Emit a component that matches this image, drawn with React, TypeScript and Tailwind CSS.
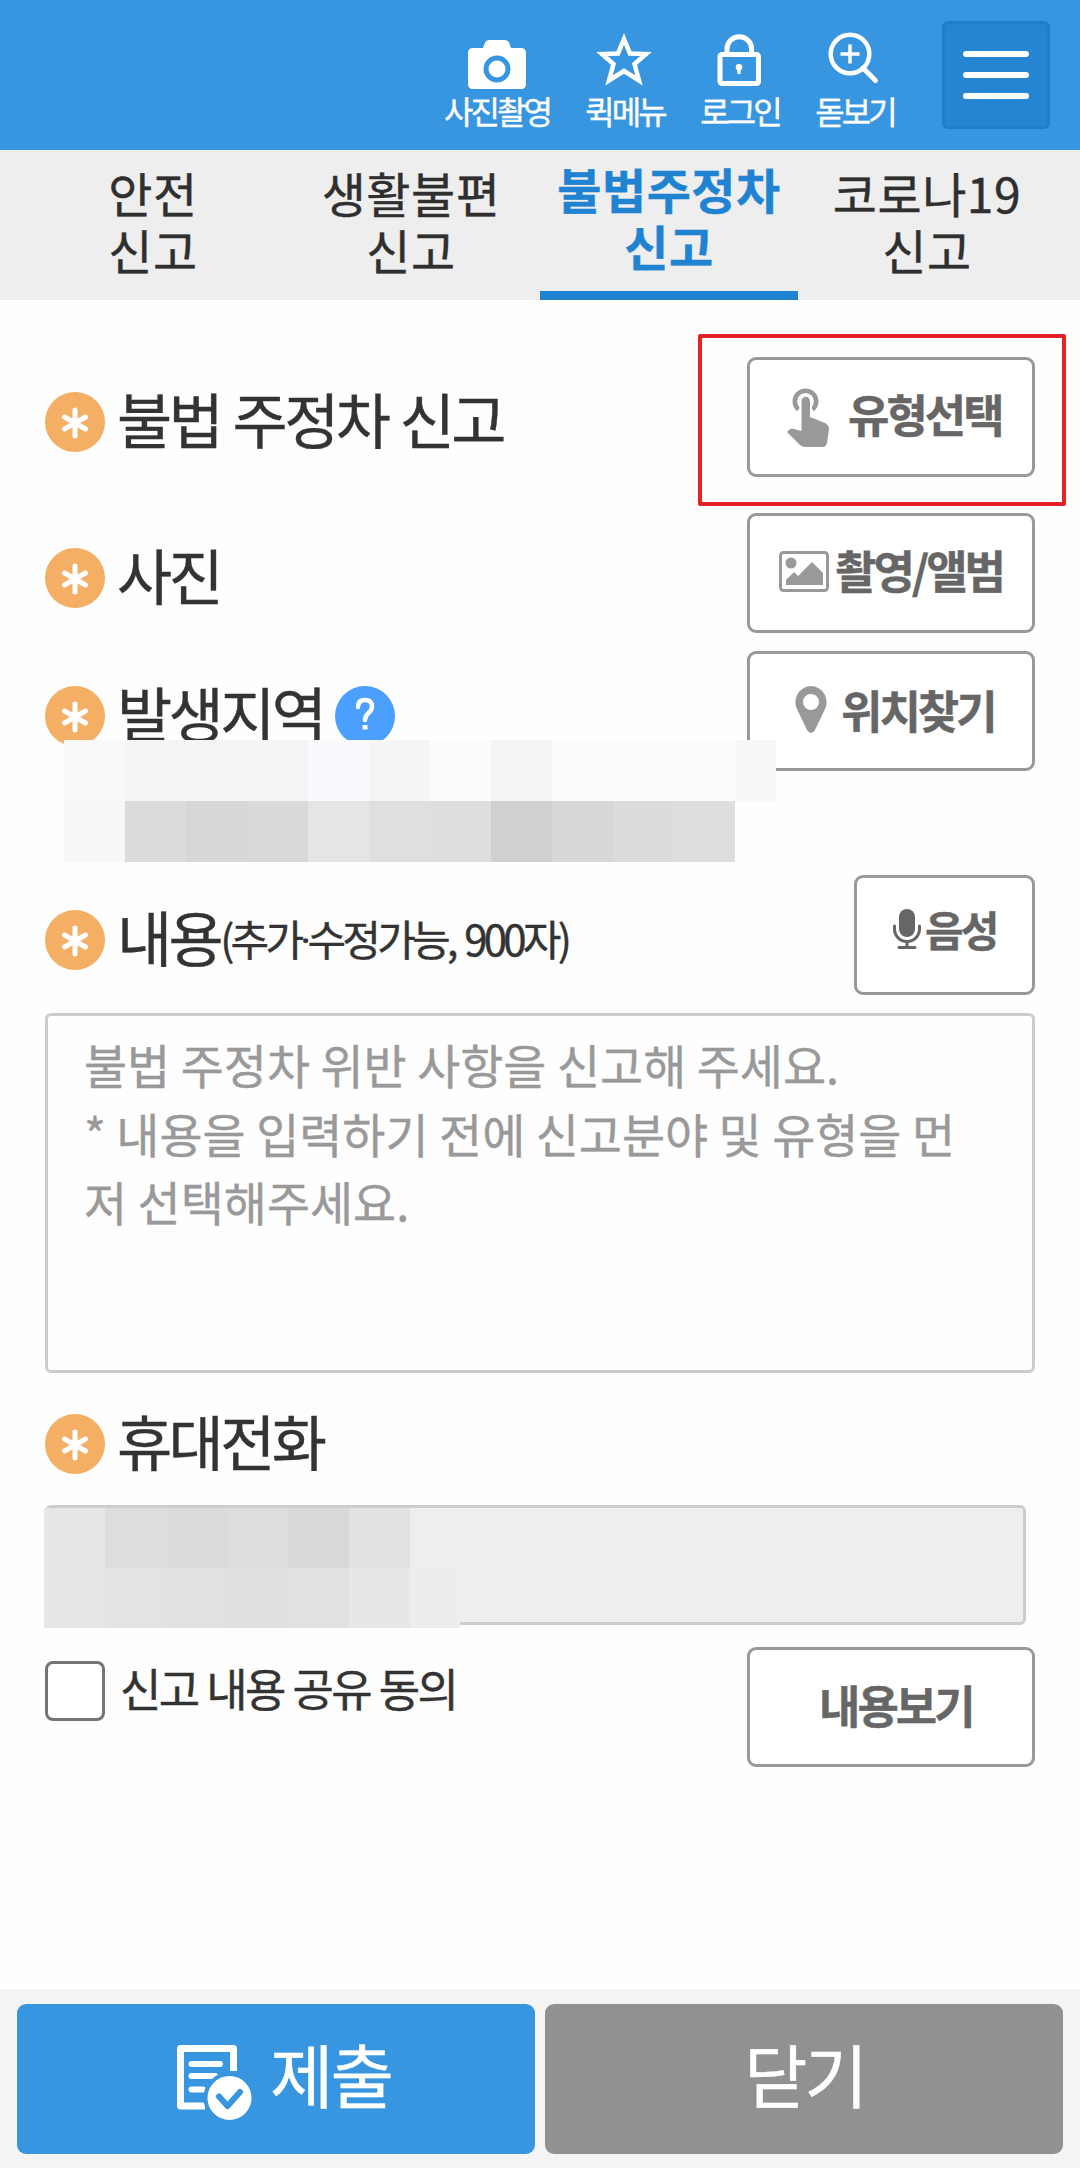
import type { ReactNode } from "react";

const tabs = [
  { top: "안전", bottom: "신고", active: false },
  { top: "생활불편", bottom: "신고", active: false },
  { top: "불법주정차", bottom: "신고", active: true },
  { top: "코로나19", bottom: "신고", active: false },
];

const addressMask = [
  ["#fbf9f8", "#f5f5f5", "#f5f5f5", "#f5f5f5", "#f8fafd", "#f5f5f5", "#fbfbfb", "#f5f5f5", "#fbfbfb", "#fcfcfc", "#fcfcfc", "#f8f8f8"],
  ["#f7f7f7", "#dbdbdb", "#d7d7d7", "#d9d9d9", "#e5e5e5", "#dfdfdf", "#dedede", "#d0d0d0", "#d7d7d7", "#dcdcdc", "#dedede", "#fefefe"],
];

const phoneMask = [
  ["#e6e6e6", "#dddddd", "#dbdbdb", "#dddddd", "#d9d9d9", "#e2e2e2", "#eeeeee"],
  ["#e6e6e6", "#e3e3e3", "#e1e1e1", "#e0e0e0", "#e1e1e1", "#e7e7e7", "#ededed"],
];

function Mask({ rows, last }: { rows: string[][]; last: number }) {
  return (
    <>
      {rows.map((row, r) => (
        <div key={r} className="flex flex-1">
          {row.map((color, i) => (
            <div key={i} style={{ backgroundColor: color, width: i === row.length - 1 ? last : 61 }} />
          ))}
        </div>
      ))}
    </>
  );
}

function Required() {
  return (
    <svg viewBox="0 0 60 60" className="mt-[35px] h-[60px] w-[60px] shrink-0">
      <circle cx="30" cy="30" r="30" fill="#f5af65" />
      <g stroke="#fff" strokeWidth="5" strokeLinecap="round">
        <path d="M30 18v26M19.500 25l21 12M40.500 25L19.500 37" />
      </g>
    </svg>
  );
}

function Row({ label, children, extra }: { label: string; children?: ReactNode; extra?: ReactNode }) {
  return (
    <div className="flex h-[120px] items-start px-[45px]">
      <Required />
      <span className="mt-[31px] ml-[12px] text-[60px] leading-[60px] tracking-[-3.600px] whitespace-nowrap text-[#333] [word-spacing:2.5px]">{label}</span>
      {extra}
      <div className="ml-auto">{children}</div>
    </div>
  );
}

function OutlineButton({ children, className }: { children: ReactNode; className: string }) {
  return (
    <button
      className={`flex h-[120px] items-start rounded-[9px] border-[3px] border-[#999] bg-white text-[45px] leading-[60px] font-bold tracking-[-3px] whitespace-nowrap text-[#666] ${className}`}
    >
      {children}
    </button>
  );
}

export default function App() {
  return (
    <div className="flex h-[2168px] w-[1080px] flex-col overflow-hidden bg-[#fefefe] font-['Noto_Sans_CJK_KR','Noto_Sans',sans-serif] [-webkit-text-stroke:0.4px]">
      <header className="flex h-[150px] shrink-0 items-start justify-end bg-[#3896e1] pr-[30px] text-[32px] leading-[36px] tracking-[-3px] whitespace-nowrap text-white">
        <div className="mt-[30px] flex w-[110px] flex-col items-center">
          <svg viewBox="0 0 60 60" className="h-[60px] w-[60px]" fill="#fff">
            <path d="M6 18H16L18 12.500Q19 10 22 10H38Q41 10 42 12.500L44 18H54Q59 18 59 23V54Q59 59 54 59H6Q1 59 1 54V23Q1 18 6 18Z" />
            <circle cx="30" cy="39" r="11" stroke="#3896e1" strokeWidth="5" />
          </svg>
          <span className="mt-[2px]">사진촬영</span>
        </div>
        <div className="mt-[30px] ml-[22px] flex w-[100px] flex-col items-center">
          <svg viewBox="0 0 60 60" className="h-[60px] w-[60px]" fill="none" stroke="#fff" strokeWidth="4.500">
            <path d="M30 9L36 23.500L52 24L40.500 34L45 50.500L30 41L15 50.500L19.500 34L8 24L24 23.500Z" />
          </svg>
          <span className="mt-[2px] pl-[2px]">퀵메뉴</span>
        </div>
        <div className="mt-[30px] ml-[15px] flex w-[100px] flex-col items-center">
          <svg viewBox="0 0 60 60" className="h-[60px] w-[60px]" fill="none" stroke="#fff" strokeWidth="5">
            <rect x="11" y="24.500" width="38.500" height="29" rx="2" />
            <path d="M18 24V19A12.300 12.300 0 0 1 42.600 19V24" />
            <path d="M30 34a3.300 3.300 0 0 1 3.300 3.300q0 2-1.500 3L31.500 44h-3l-.3-3.700Q26.700 39.300 26.700 37.300a3.300 3.300 0 0 1 3.300-3.300Z" fill="#fff" stroke="none" />
          </svg>
          <span className="mt-[2px] pl-[2px]">로그인</span>
        </div>
        <div className="mt-[30px] ml-[15px] flex w-[100px] flex-col items-center">
          <svg viewBox="0 0 60 60" className="h-[60px] w-[60px]" fill="none" stroke="#fff" strokeWidth="4.500">
            <circle cx="26" cy="24" r="19.300" />
            <path d="M26 14.500V33.500M16.500 24H35.500" strokeWidth="3.500" />
            <path d="M39 38L51.500 50.500" strokeWidth="5" strokeLinecap="round" />
          </svg>
          <span className="mt-[2px] pl-[2px]">돋보기</span>
        </div>
        <button className="mt-[21px] ml-[38px] flex h-[108px] w-[108px] flex-col items-center justify-center gap-[15px] rounded-[6px] border-[3px] border-[#207dc8] bg-[#2585d3]">
          <span className="h-[6px] w-[66px] rounded-full bg-white" />
          <span className="h-[6px] w-[66px] rounded-full bg-white" />
          <span className="h-[6px] w-[66px] rounded-full bg-white" />
        </button>
      </header>

      <nav className="grid h-[150px] shrink-0 grid-cols-4 bg-[#eee] px-[24px] text-center text-[48px] leading-[57px] tracking-[0.500px] whitespace-nowrap text-[#2f2f2f]">
        {tabs.map((t) => (
          <div
            key={t.top}
            className={
              t.active
                ? "border-b-[9px] border-[#1f83d2] pt-[10px] font-bold text-[#1f83d2]"
                : "pt-[14px]"
            }
          >
            {t.top}
            <br />
            {t.bottom}
          </div>
        ))}
      </nav>

      <main className="relative flex flex-1 flex-col pt-[57px]">
        <Row label="불법 주정차 신고">
          <div className="relative">
            <OutlineButton className="w-[288px] pl-[37px]">
              <svg viewBox="0 0 42 59" className="mt-[28px] h-[59px] w-[42px] shrink-0" fill="#999">
                <path d="M11.500 21.500A10.700 10.700 0 1 1 25.500 21.500" fill="none" stroke="#999" strokeWidth="4.600" />
                <path d="M14.500 13A4.250 4.250 0 0 1 23 13V29L38 35Q42 37 42 41L40 55Q39 59 36 59H18Q15 59 13 57L0 44L2 42Q4 40 7 41L14.500 43Z" stroke="#fff" strokeWidth="4" paintOrder="stroke" />
              </svg>
              <span className="mt-[24px] ml-[19px]">유형선택</span>
            </OutlineButton>
            <div className="absolute -top-[23px] -left-[49px] h-[172px] w-[368px] rounded-[2px] border-4 border-[#e92129]" />
          </div>
        </Row>

        <div className="mt-[36px]">
          <Row label="사진">
            <OutlineButton className="w-[288px] pl-[29px]">
              <svg viewBox="0 0 50 41" className="mt-[35px] h-[41px] w-[50px] shrink-0" fill="#999">
                <rect x="1.500" y="1.500" width="47" height="38" rx="3" fill="none" stroke="#999" strokeWidth="3" />
                <circle cx="12" cy="12" r="5.500" />
                <path d="M7 34V29L15 21L19 25L33 11L44 22V34Z" />
              </svg>
              <span className="mt-[24px] ml-[6px]">촬영/앨범</span>
            </OutlineButton>
          </Row>
        </div>

        <div className="relative mt-[18px]">
          <Row
            label="발생지역"
            extra={
              <span className="mt-[35px] ml-[12px] flex h-[60px] w-[60px] items-center justify-center rounded-full bg-[#4a9fff]">
                <svg viewBox="0 0 24 36" className="mb-[4px] h-[36px] w-[24px]" fill="none" stroke="#fff" strokeWidth="4.500">
                  <path d="M5 11Q5 4 12 4T19 10.500Q19 14 15.500 17T12 24" strokeLinecap="round" />
                  <path d="M9.500 29h5v4.500h-5Z" fill="#fff" stroke="none" />
                </svg>
              </span>
            }
          >
            <OutlineButton className="w-[288px] pl-[45px]">
              <svg viewBox="0 0 32 47" className="mt-[32px] h-[47px] w-[32px] shrink-0" fill="#999">
                <path fillRule="evenodd" d="M16 0A16 16 0 0 1 30 23L20 44Q18.500 47 16 47T12 44L2 23A16 16 0 0 1 16 0ZM16 8A8 8 0 1 0 16 24A8 8 0 1 0 16 8Z" />
              </svg>
              <span className="mt-[26px] ml-[14px]">위치찾기</span>
            </OutlineButton>
          </Row>
          <div className="absolute top-[89px] left-[64px] flex h-[122px] w-[712px] flex-col">
            <Mask rows={addressMask} last={41} />
          </div>
        </div>

        <div className="mt-[104px]">
          <Row
            label="내용"
            extra={
              <span className="mt-[33px] text-[42px] leading-[60px] tracking-[-3.800px] whitespace-nowrap text-[#333] [word-spacing:4px]">
                (추가<span className="font-['Roboto']">·</span>수정가능, 900자)
              </span>
            }
          >
            <OutlineButton className="w-[181px] pl-[36px]">
              <svg viewBox="0 0 28 40" className="mt-[31px] h-[40px] w-[28px] shrink-0" fill="none" stroke="#666" strokeWidth="3" strokeLinecap="round">
                <rect x="6" y="0" width="16" height="28" rx="8" fill="#666" stroke="none" />
                <path d="M1.500 17V20A12.500 12.500 0 0 0 26.500 20V17M14 33V38M6 38.500H22" />
              </svg>
              <span className="mt-[21px] ml-[4px] text-[42px]">음성</span>
            </OutlineButton>
          </Row>
        </div>

        <div className="mx-[45px] mt-[18px] h-[360px] shrink-0 rounded-[6px] border-[3px] border-[#ccc] pt-[14px] pl-[36px] text-[46.850px] leading-[68.500px] whitespace-nowrap text-[#999]">
          <p>불법 주정차 위반 사항을 신고해 주세요.</p>
          <p>* 내용을 입력하기 전에 신고분야 및 유형을 먼</p>
          <p>저 선택해주세요.</p>
        </div>

        <div className="mt-[6px]">
          <Row label="휴대전화" />
        </div>

        <div className="relative mt-[6px] ml-[45px] h-[120px] w-[981px] shrink-0 rounded-[6px] border-[3px] border-[#ccc] bg-[#eee]">
          <div className="absolute top-0 -left-[4px] flex h-[120px] w-[416px] flex-col">
            <Mask rows={phoneMask} last={50} />
          </div>
        </div>

        <div className="mt-[22px] flex items-start px-[45px]">
          <span className="mt-[14px] h-[60px] w-[60px] rounded-[8px] border-[3px] border-[#757575] bg-white" />
          <span className="mt-[11px] ml-[15px] text-[45px] leading-[60px] tracking-[-2.700px] whitespace-nowrap text-[#333] [word-spacing:1.5px]">신고 내용 공유 동의</span>
          <div className="ml-auto">
            <OutlineButton className="w-[288px] pl-[69px]">
              <span className="mt-[25px]">내용보기</span>
            </OutlineButton>
          </div>
        </div>
      </main>

      <footer className="flex h-[179px] shrink-0 gap-[10px] bg-[#f4f4f4] px-[17px] pt-[15px] text-[69px] leading-[80px] tracking-[-3px] text-white">
        <button className="flex h-[150px] w-[518px] items-start rounded-[9px] bg-[#3896e1] pl-[160px]">
          <svg viewBox="0 0 75 76" className="mt-[41px] h-[76px] w-[75px] shrink-0" fill="none" stroke="#fff">
            <path d="M56.500 26V3.500H3.500V61H28" strokeWidth="7" strokeLinejoin="round" />
            <path d="M14.500 19H43M14.500 31H38M14.500 44.500H26" strokeWidth="6" strokeLinecap="round" />
            <circle cx="52.500" cy="53" r="24" fill="#fff" stroke="#3896e1" strokeWidth="4" />
            <path d="M42 51.500L50.500 61L63 47" stroke="#3896e1" strokeWidth="6" strokeLinecap="round" strokeLinejoin="round" />
          </svg>
          <span className="mt-[29px] ml-[18px]">제출</span>
        </button>
        <button className="flex h-[150px] w-[518px] items-start rounded-[9px] bg-[#919191] pl-[199px]">
          <span className="mt-[29px]">닫기</span>
        </button>
      </footer>
    </div>
  );
}
